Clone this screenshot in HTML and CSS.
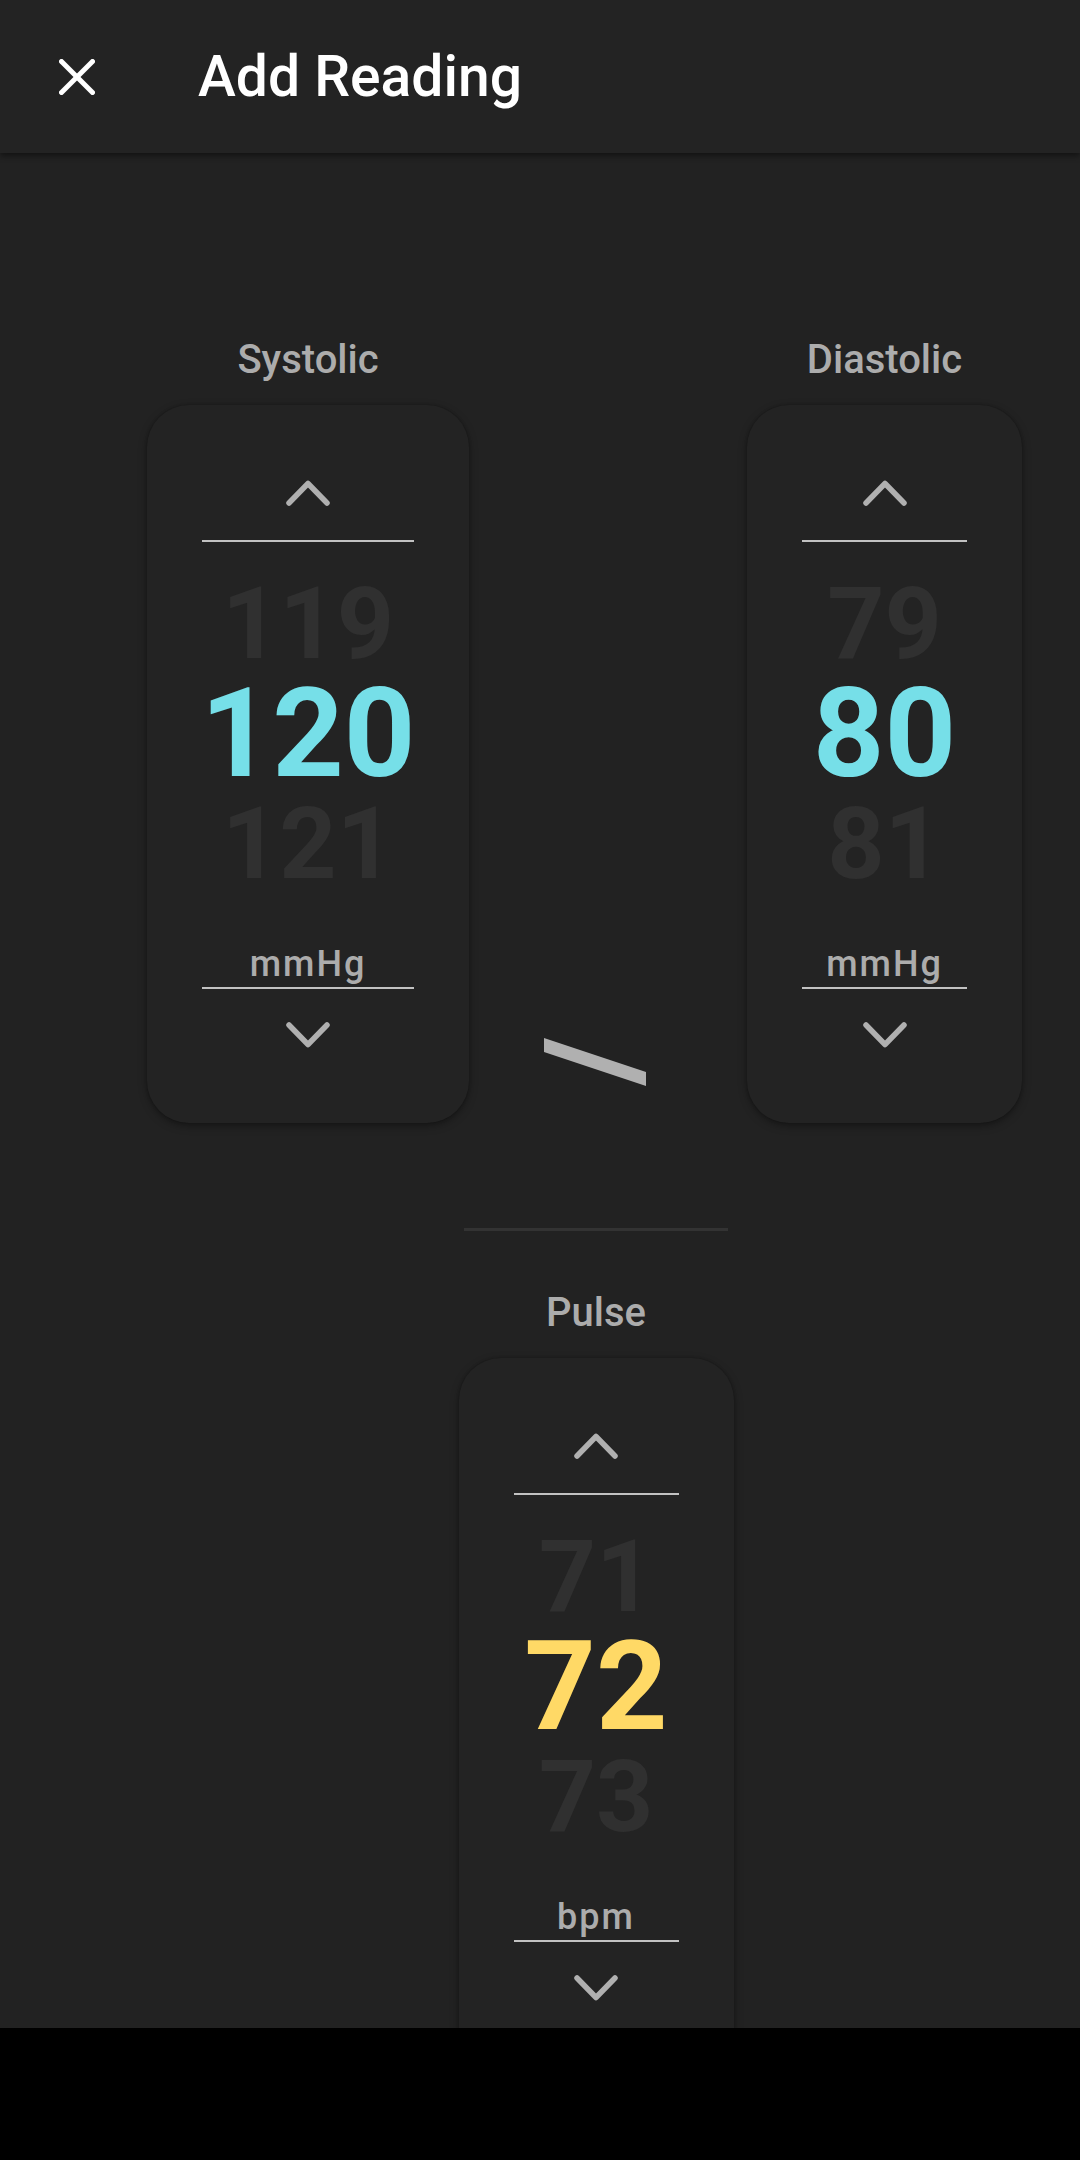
FILE: index.html
```html
<!DOCTYPE html>
<html lang="en">
<head>
<meta charset="utf-8">
<title>Add Reading</title>
<link rel="stylesheet" href="styles.css">
</head>
<body>
<div class="screen">
  <header class="appbar">
    <svg class="close" width="36" height="36" viewBox="0 0 36 36" aria-hidden="true">
      <line x1="2.5" y1="2.5" x2="33.5" y2="33.5"/>
      <line x1="33.5" y1="2.5" x2="2.5" y2="33.5"/>
    </svg>
    <h1 class="title">Add Reading</h1>
  </header>

  <main class="content">
    <section class="bp-row">
      <div class="field">
        <div class="label">Systolic</div>
        <div class="picker wide">
          <svg class="chev" width="44" height="26" viewBox="0 0 44 26"><polyline points="3,23 22,3.5 41,23"/></svg>
          <div class="rule rule-top"></div>
          <div class="num side">119</div>
          <div class="num current cyan">120</div>
          <div class="num side">121</div>
          <div class="unit">mmHg</div>
          <svg class="chev down" width="44" height="26" viewBox="0 0 44 26"><polyline points="3,3 22,22.5 41,3"/></svg>
        </div>
      </div>

      <div class="slash-area">
        <svg class="slash" width="102" height="48" viewBox="0 0 102 48"><polygon points="0,0 102,34 102,48 0,14"/></svg>
      </div>

      <div class="field">
        <div class="label">Diastolic</div>
        <div class="picker narrow">
          <svg class="chev" width="44" height="26" viewBox="0 0 44 26"><polyline points="3,23 22,3.5 41,23"/></svg>
          <div class="rule rule-top"></div>
          <div class="num side">79</div>
          <div class="num current cyan">80</div>
          <div class="num side">81</div>
          <div class="unit">mmHg</div>
          <svg class="chev down" width="44" height="26" viewBox="0 0 44 26"><polyline points="3,3 22,22.5 41,3"/></svg>
        </div>
      </div>
    </section>

    <section class="pulse-section">
      <div class="divider"></div>
      <div class="field">
        <div class="label">Pulse</div>
        <div class="picker narrow">
          <svg class="chev" width="44" height="26" viewBox="0 0 44 26"><polyline points="3,23 22,3.5 41,23"/></svg>
          <div class="rule rule-top"></div>
          <div class="num side">71</div>
          <div class="num current yellow">72</div>
          <div class="num side">73</div>
          <div class="unit">bpm</div>
          <svg class="chev down" width="44" height="26" viewBox="0 0 44 26"><polyline points="3,3 22,22.5 41,3"/></svg>
        </div>
      </div>
    </section>
  </main>
</div>
<div class="navbar"></div>
</body>
</html>
```

FILE: styles.css
```css
html, body {
  margin: 0;
  padding: 0;
}

body {
  width: 1080px;
  height: 2160px;
  overflow: hidden;
  background: #222222;
  font-family: Roboto, "Noto Sans", "Liberation Sans", sans-serif;
}

.screen {
  height: 2028px;
  overflow: hidden;
  display: flex;
  flex-direction: column;
}

.navbar {
  height: 132px;
  background: #000000;
}

/* App bar */
.appbar {
  height: 153px;
  flex: none;
  display: flex;
  align-items: center;
  padding-left: 59px;
  background: #232323;
  box-shadow: 0 3px 6px rgba(0, 0, 0, 0.45);
  position: relative;
  z-index: 1;
}

.close {
  flex: none;
  stroke: #ffffff;
  stroke-width: 5;
  stroke-linecap: round;
}

.title {
  margin: 0 0 0 103px;
  font-size: 57px;
  line-height: 68px;
  font-weight: 500;
  color: #ffffff;
}

/* Content */
.content {
  padding-top: 183px;
}

.bp-row {
  display: flex;
  align-items: flex-start;
  padding-left: 147px;
}

.field {
  display: flex;
  flex-direction: column;
  align-items: center;
}

.label {
  font-size: 40px;
  line-height: 48px;
  font-weight: 500;
  color: #acacac;
  margin-bottom: 21px;
  white-space: nowrap;
}

.picker {
  display: flex;
  flex-direction: column;
  align-items: center;
  padding: 75px 55px;
  background: #232323;
  border-radius: 42px;
  box-shadow: 0 3px 8px rgba(0, 0, 0, 0.35), 0 0 3px rgba(0, 0, 0, 0.25);
}

.picker.wide { width: 212px; }
.picker.narrow { width: 165px; }

.chev {
  display: block;
  flex: none;
  fill: none;
  stroke: #b0b0b0;
  stroke-width: 5.5;
  stroke-linecap: round;
  stroke-linejoin: round;
}

.chev.down {
  margin-top: 33px;
}

.rule {
  align-self: stretch;
  height: 2px;
  background: #c2c2c2;
}

.rule-top {
  margin-top: 34px;
  margin-bottom: 32px;
}

.num {
  align-self: stretch;
  font-weight: 700;
  text-align: center;
  white-space: nowrap;
  display: flex;
  justify-content: center;
}

.num.side {
  font-size: 100px;
  line-height: 100px;
  height: 100px;
  color: #303030;
}

.num.current {
  font-size: 125px;
  line-height: 120px;
  height: 120px;
}

.cyan { color: #76dfe8; }
.yellow { color: #ffd966; }

.unit {
  align-self: stretch;
  margin-top: 50px;
  font-size: 36px;
  line-height: 40px;
  font-weight: 500;
  letter-spacing: 2px;
  color: #acacac;
  text-align: center;
  padding-bottom: 3px;
  border-bottom: 2px solid #c2c2c2;
}

/* Slash separator */
.slash-area {
  width: 278px;
  flex: none;
  padding-top: 702px;
  padding-left: 75px;
  box-sizing: border-box;
}

.slash {
  display: block;
  fill: #b0b0b0;
}

/* Pulse */
.pulse-section {
  width: 274px;
  margin-left: 459px;
  margin-top: 105px;
}

.divider {
  height: 3px;
  margin: 0 5px 58px;
  background: #333333;
}
```
